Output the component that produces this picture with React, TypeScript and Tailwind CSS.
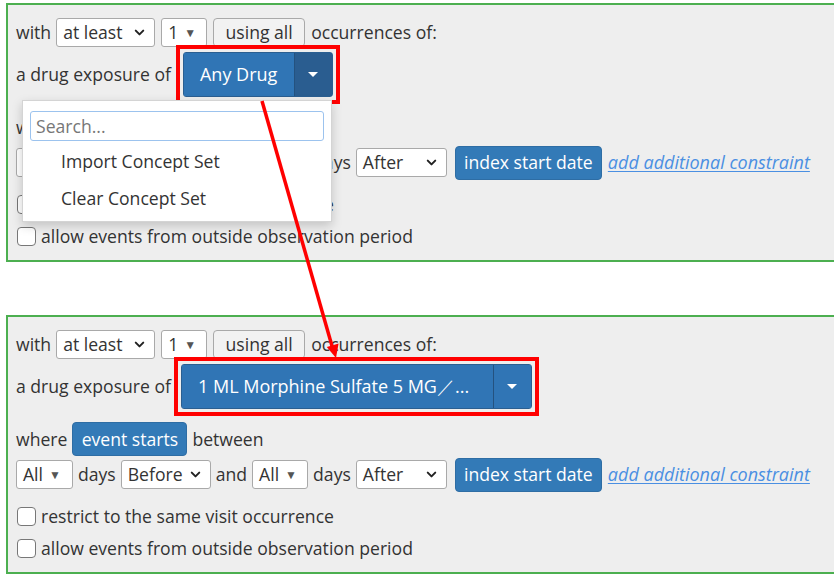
import { ChevronDown } from "lucide-react";

function Select({ label, w }: { label: string; w: string }) {
  return (
    <span className={`flex h-[29px] ${w} items-center justify-between rounded-[3px] border border-[#a9a9a9] bg-white pl-[6px] pr-[7px] text-[#333]`}>
      <span>{label}</span>
      <ChevronDown className="size-[15px] text-[#222]" strokeWidth={3.2} aria-hidden="true" />
    </span>
  );
}

function Spin({ label, w }: { label: string; w: string }) {
  return (
    <span className={`flex h-[29px] ${w} items-center gap-[6px] rounded-[3px] border border-[#a9a9a9] bg-white pl-[6px] text-[#333]`}>
      <span>{label}</span>
      <span className="text-[12px] text-[#555]">▼</span>
    </span>
  );
}

function BlueBtn({ children, w }: { children: React.ReactNode; w: string }) {
  return (
    <span className={`flex h-[34px] ${w} items-center justify-center rounded-[4px] border border-[#2e6da4] bg-[#337ab7] text-white`}>
      {children}
    </span>
  );
}

function Check({ label }: { label: string }) {
  return (
    <div className="flex h-[24px] items-center gap-[5px]">
      <span className="ml-[1px] size-[19px] shrink-0 rounded-[4px] border border-[#777] bg-white" />
      <span>{label}</span>
    </div>
  );
}

function Caret() {
  return <span className="h-0 w-0 border-x-[5px] border-t-[5px] border-x-transparent border-t-white" />;
}

function Panel({ open, drug, mainW, gap }: { open: boolean; drug: string; mainW: string; gap: string }) {
  return (
    <section className="relative ml-[6px] w-[840px] border-2 border-r-0 border-[#4caf50] bg-[#eeeeee] pb-[12px] pl-[8px] pt-[13px] text-[#333]">
      <div className="flex h-[29px] items-center gap-[6px]">
        <span className="mr-[-1px]">with</span>
        <Select label="at least" w="w-[99px]" />
        <Spin label="1" w="w-[46px]" />
        <span className="flex h-[29px] w-[92px] items-center justify-center rounded-[4px] border border-[#a9a9a9] bg-[#f2f2f2]">using all</span>
        <span>occurrences of:</span>
      </div>

      <div className="mt-[5px] flex h-[45px] items-center">
        <span>a drug exposure of</span>
        <span className={`relative ${gap} flex h-[45px] rounded-[3px] border border-[#2b5f91] text-[18px] text-white`}>
          <span className={`flex ${mainW} items-center pl-[16px] bg-[#3075b5]`}>{drug}</span>
          <span className={`flex w-[38px] items-center justify-center border-l border-[#24527f] ${open ? "bg-[#2a5d90]" : "bg-[#3075b5]"}`}>
            <Caret />
          </span>
          <span className="pointer-events-none absolute inset-[-8px] border-4 border-[#ff0000]" />
        </span>
      </div>

      <div className="mt-[13px] flex h-[34px] items-center gap-[5px]">
        <span>where</span>
        <BlueBtn w="w-[115px]">event starts</BlueBtn>
        <span>between</span>
      </div>

      <div className="mt-[2px] flex h-[33px] items-center gap-[5px]">
        <Spin label="All" w="w-[57px]" />
        <span>days</span>
        <Select label="Before" w="w-[90px]" />
        <span>and</span>
        <Spin label="All" w="w-[56px]" />
        <span>days</span>
        <Select label="After" w="w-[91px]" />
        <span className="ml-[3px]">
          <BlueBtn w="w-[147px]">index start date</BlueBtn>
        </span>
        <a className="ml-[1px] text-[18px] italic text-[#4a8fe2] underline underline-offset-2">add additional constraint</a>
      </div>

      <div className="mt-[13px]">
        <Check label="restrict to the same visit occurrence" />
      </div>
      <div className="mt-[8px]">
        <Check label="allow events from outside observation period" />
      </div>

      {open && (
        <div className="absolute left-[14px] top-[95px] z-10 h-[122px] w-[310px] border border-[#d4d4d4] bg-white shadow-[0_4px_10px_rgba(0,0,0,0.18)]">
          <div className="mx-[7px] mt-[10px] flex h-[30px] items-center rounded-[3px] border border-[#9cc3ee] px-[5px] text-[#777]">Search...</div>
          <div className="mt-[2px] flex flex-col pl-[38px]">
            <span className="flex h-[37px] items-center">Import Concept Set</span>
            <span className="flex h-[37px] items-center">Clear Concept Set</span>
          </div>
        </div>
      )}
    </section>
  );
}

export default function App() {
  return (
    <main className="relative h-[577px] w-[834px] overflow-hidden bg-white font-['Open_Sans',sans-serif] text-[17.6px]">
      <div className="pt-[3px]">
        <Panel open drug="Any Drug" mainW="w-[110px]" gap="ml-[12px]" />
      </div>
      <div className="mt-[53px]">
        <Panel open={false} drug="1 ML Morphine Sulfate 5 MG／..." mainW="w-[311px]" gap="ml-[10px]" />
      </div>
      <svg className="pointer-events-none absolute inset-0 z-20" width="834" height="577" aria-hidden="true">
        <line x1="262" y1="101" x2="332" y2="346" stroke="#ff0000" strokeWidth="3.5" />
        <polygon points="336,358 338.6,343.6 326.8,347" fill="#ff0000" />
      </svg>
    </main>
  );
}
